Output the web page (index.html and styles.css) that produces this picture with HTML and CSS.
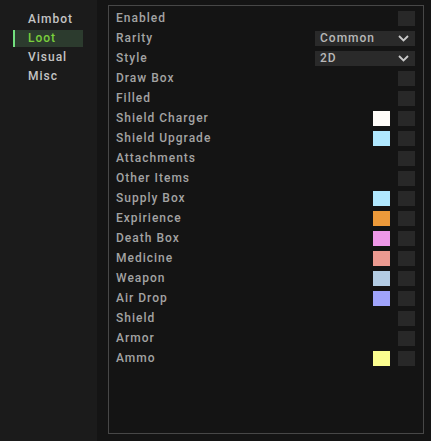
FILE: index.html
```html
<!DOCTYPE html>
<html lang="en">

<head>
    <meta charset="UTF-8">
    <meta name="viewport" content="width=device-width, initial-scale=1.0">
    <title>Loot</title>
    <link rel="stylesheet" href="styles.css">
</head>

<body>
    <div class="app">
        <div class="sidebar">
            <div class="tab">Aimbot</div>
            <div class="tab active">Loot</div>
            <div class="tab">Visual</div>
            <div class="tab">Misc</div>
        </div>
        <div class="main">
            <div class="panel">
                <div class="row"><span class="label">Enabled</span><span class="check"></span></div>
                <div class="row"><span class="label">Rarity</span>
                    <div class="combo"><span>Common</span>
                        <svg width="11" height="7" viewBox="0 0 11 7"><path d="M1 1 L5.5 5.5 L10 1" fill="none" stroke="#c8c8c8" stroke-width="1.8"/></svg>
                    </div>
                </div>
                <div class="row"><span class="label">Style</span>
                    <div class="combo"><span>2D</span>
                        <svg width="11" height="7" viewBox="0 0 11 7"><path d="M1 1 L5.5 5.5 L10 1" fill="none" stroke="#c8c8c8" stroke-width="1.8"/></svg>
                    </div>
                </div>
                <div class="row"><span class="label">Draw Box</span><span class="check"></span></div>
                <div class="row"><span class="label">Filled</span><span class="check"></span></div>
                <div class="row"><span class="label">Shield Charger</span><span class="swatch" style="background:#fffcf8"></span><span class="check"></span></div>
                <div class="row"><span class="label">Shield Upgrade</span><span class="swatch" style="background:#b0e8fe"></span><span class="check"></span></div>
                <div class="row"><span class="label">Attachments</span><span class="check"></span></div>
                <div class="row"><span class="label">Other Items</span><span class="check"></span></div>
                <div class="row"><span class="label">Supply Box</span><span class="swatch" style="background:#b0e8fe"></span><span class="check"></span></div>
                <div class="row"><span class="label">Expirience</span><span class="swatch" style="background:#ec9a3a"></span><span class="check"></span></div>
                <div class="row"><span class="label">Death Box</span><span class="swatch" style="background:#ee98e8"></span><span class="check"></span></div>
                <div class="row"><span class="label">Medicine</span><span class="swatch" style="background:#eb9a90"></span><span class="check"></span></div>
                <div class="row"><span class="label">Weapon</span><span class="swatch" style="background:#b3cce3"></span><span class="check"></span></div>
                <div class="row"><span class="label">Air Drop</span><span class="swatch" style="background:#a0a4fb"></span><span class="check"></span></div>
                <div class="row"><span class="label">Shield</span><span class="check"></span></div>
                <div class="row"><span class="label">Armor</span><span class="check"></span></div>
                <div class="row"><span class="label">Ammo</span><span class="swatch" style="background:#fbfd8f"></span><span class="check"></span></div>
            </div>
        </div>
    </div>
</body>

</html>
```

FILE: styles.css
```css
body {
    margin: 0;
    background-color: #141414;
    font-family: Roboto, "Liberation Sans", sans-serif;
    font-size: 12px;
    font-weight: 500;
    letter-spacing: 1px;
}

.app {
    display: flex;
    height: 441px;
}

.sidebar {
    width: 97px;
    background-color: #1b1b1b;
    padding-top: 10px;
    box-sizing: border-box;
}

.tab {
    height: 19px;
    line-height: 19px;
    margin-left: 13px;
    width: 70px;
    padding-left: 15px;
    box-sizing: border-box;
    color: #c4c4c4;
}

.tab.active {
    background-color: #2c3b2e;
    color: #7ad03c;
    border-left: 2px solid #72e07e;
    padding-left: 13px;
    height: 17px;
    line-height: 17px;
    margin: 1px 0 1px 13px;
}

.main {
    flex: 1;
    padding: 5px 7px 7px 11px;
}

.panel {
    height: 100%;
    box-sizing: border-box;
    border: 1px solid #474747;
    padding: 2px 8px 0 7px;
}

.row {
    display: flex;
    align-items: center;
    height: 20px;
}

.label {
    flex: 1;
    color: #a3a3a3;
}

.check {
    width: 17px;
    height: 15px;
    background-color: #282828;
}

.swatch {
    width: 17px;
    height: 15px;
    margin-right: 8px;
}

.combo {
    width: 100px;
    height: 15px;
    background-color: #2a2a2a;
    display: flex;
    align-items: center;
    justify-content: space-between;
    padding: 0 6px 0 5px;
    box-sizing: border-box;
    color: #b8b8b8;
}
```
